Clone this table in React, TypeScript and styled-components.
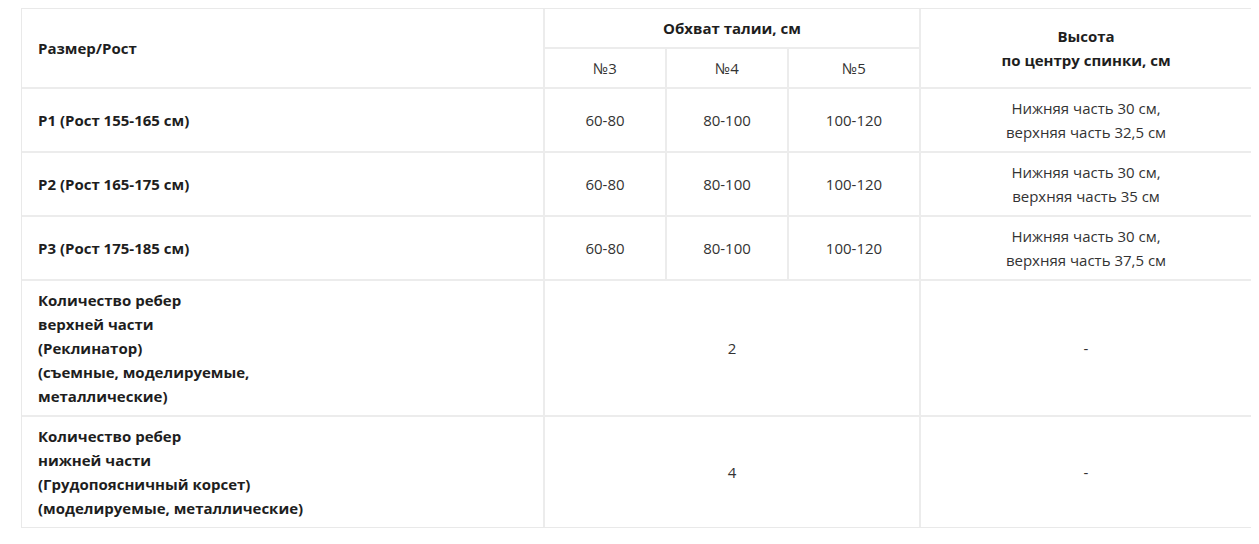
import * as React from "react";
import styled, { createGlobalStyle } from "styled-components";

const GlobalStyle = createGlobalStyle`
    body {
        margin: 8px;
        background: #fff;
        font-family: "Open Sans", "Liberation Sans", sans-serif;
    }
`;

const Frame = styled.div`
    margin-left: 13px;
    width: 1231px;
    box-sizing: border-box;
    border: 1px solid #e9e9e9;
`;

const Table = styled.table`
    width: 100%;
    table-layout: fixed;
    border-collapse: collapse;
    border-style: hidden;
    font-size: 15px;
    line-height: 24px;
    color: #333;
`;

const Cell = styled.td<{ $bold?: boolean; $left?: boolean }>`
    border: 2px solid #ececec;
    padding: 7px 16px;
    vertical-align: middle;
    text-align: ${(p) => (p.$left ? "left" : "center")};
    font-weight: ${(p) => (p.$bold ? 700 : 400)};
    color: ${(p) => (p.$bold ? "#1e1e1e" : "#333")};
    white-space: nowrap;
`;

type Row = {
    label: string;
    values: string[];
    height: string[];
};

const rows: Row[] = [
    { label: "P1 (Рост 155-165 см)", values: ["60-80", "80-100", "100-120"], height: ["Нижняя часть 30 см,", "верхняя часть 32,5 см"] },
    { label: "P2 (Рост 165-175 см)", values: ["60-80", "80-100", "100-120"], height: ["Нижняя часть 30 см,", "верхняя часть 35 см"] },
    { label: "P3 (Рост 175-185 см)", values: ["60-80", "80-100", "100-120"], height: ["Нижняя часть 30 см,", "верхняя часть 37,5 см"] },
];

const ribs = [
    { lines: ["Количество ребер", "верхней части", "(Реклинатор)", "(съемные, моделируемые,", "металлические)"], value: "2" },
    { lines: ["Количество ребер", "нижней части", "(Грудопоясничный корсет)", "(моделируемые, металлические)"], value: "4" },
];

const Lines = ({ lines }: { lines: string[] }) => (
    <>
        {lines.map((l, i) => (
            <React.Fragment key={i}>
                {i > 0 && <br />}
                {l}
            </React.Fragment>
        ))}
    </>
);

const App = () => {
    return (
        <>
            <GlobalStyle />
            <Frame>
                <Table>
                    <colgroup>
                        <col style={{ width: 522 }} />
                        <col style={{ width: 122 }} />
                        <col style={{ width: 122 }} />
                        <col style={{ width: 132 }} />
                        <col />
                    </colgroup>
                    <thead>
                        <tr>
                            <Cell as="th" rowSpan={2} $bold $left>
                                Размер/Рост
                            </Cell>
                            <Cell as="th" colSpan={3} $bold>
                                Обхват талии, см
                            </Cell>
                            <Cell as="th" rowSpan={2} $bold>
                                <Lines lines={["Высота", "по центру спинки, см"]} />
                            </Cell>
                        </tr>
                        <tr>
                            <Cell as="th">№3</Cell>
                            <Cell as="th">№4</Cell>
                            <Cell as="th">№5</Cell>
                        </tr>
                    </thead>
                    <tbody>
                        {rows.map((r) => (
                            <tr key={r.label}>
                                <Cell $bold $left>
                                    {r.label}
                                </Cell>
                                {r.values.map((v, i) => (
                                    <Cell key={i}>{v}</Cell>
                                ))}
                                <Cell>
                                    <Lines lines={r.height} />
                                </Cell>
                            </tr>
                        ))}
                        {ribs.map((r) => (
                            <tr key={r.value}>
                                <Cell $bold $left>
                                    <Lines lines={r.lines} />
                                </Cell>
                                <Cell colSpan={3}>{r.value}</Cell>
                                <Cell>-</Cell>
                            </tr>
                        ))}
                    </tbody>
                </Table>
            </Frame>
        </>
    );
};

export default App;
